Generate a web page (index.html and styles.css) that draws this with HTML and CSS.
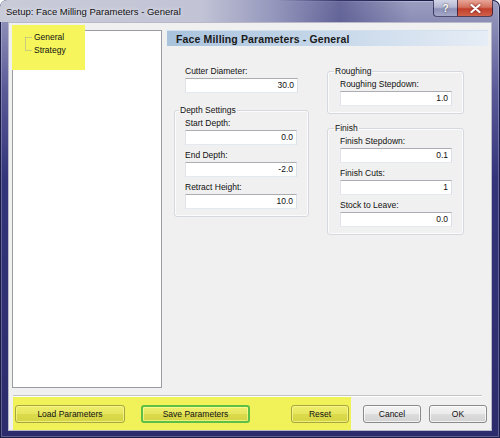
FILE: index.html
```html
<!DOCTYPE html>
<html>
<head>
<meta charset="utf-8">
<link rel="stylesheet" href="styles.css">
</head>
<body>
<div class="window">
  <div class="titlebar">
    <span class="title">Setup: Face Milling Parameters - General</span>
    <div class="caption-btns">
      <span class="cb help">?</span>
      <span class="cb close"><svg width="11" height="9" viewBox="0 0 11 9"><path d="M1.5 1 L9.5 8 M9.5 1 L1.5 8" stroke="#fff" stroke-width="2.2" stroke-linecap="round"/></svg></span>
    </div>
  </div>
  <div class="client">
    <div class="main">
      <div class="tree">
        <div class="tree-hl"></div>
        <div class="tree-list">
          <svg class="tree-lines" width="8" height="26" viewBox="0 0 8 26"><path d="M0.5 6.5 H7 M0.5 6.5 V19.5 H7" stroke="#a0a0a0" stroke-width="1" stroke-dasharray="1 1" fill="none"/></svg>
          <div class="tree-items">
            <div class="tree-item sel">General</div>
            <div class="tree-item">Strategy</div>
          </div>
        </div>
      </div>
      <div class="page">
        <div class="page-header">Face Milling Parameters - General</div>
        <div class="page-body">
          <div class="col col-left">
            <div class="field plain">
              <label>Cutter Diameter:</label>
              <div class="input">30.0</div>
            </div>
            <fieldset class="group">
              <legend>Depth Settings</legend>
              <div class="field">
                <label>Start Depth:</label>
                <div class="input">0.0</div>
              </div>
              <div class="field">
                <label>End Depth:</label>
                <div class="input">-2.0</div>
              </div>
              <div class="field">
                <label>Retract Height:</label>
                <div class="input">10.0</div>
              </div>
            </fieldset>
          </div>
          <div class="col col-right">
            <fieldset class="group">
              <legend>Roughing</legend>
              <div class="field">
                <label>Roughing Stepdown:</label>
                <div class="input">1.0</div>
              </div>
            </fieldset>
            <fieldset class="group group-finish">
              <legend>Finish</legend>
              <div class="field">
                <label>Finish Stepdown:</label>
                <div class="input">0.1</div>
              </div>
              <div class="field">
                <label>Finish Cuts:</label>
                <div class="input">1</div>
              </div>
              <div class="field">
                <label>Stock to Leave:</label>
                <div class="input">0.0</div>
              </div>
            </fieldset>
          </div>
        </div>
      </div>
    </div>
    <div class="sep"></div>
    <div class="btnbar">
      <div class="hl-group">
        <button class="btn btn-hl btn-load">Load Parameters</button>
        <button class="btn btn-hl btn-save">Save Parameters</button>
        <button class="btn btn-hl btn-reset">Reset</button>
      </div>
      <div class="std-group">
        <button class="btn btn-std">Cancel</button>
        <button class="btn btn-std">OK</button>
      </div>
    </div>
  </div>
</div>
</body>
</html>
```
FILE: styles.css
```css
* { box-sizing: border-box; }
html, body { margin: 0; padding: 0; background: #fff; }
body {
  width: 500px;
  height: 438px;
  font-family: "Liberation Sans", Arial, sans-serif;
  font-size: 8.5px;
  color: #111;
}
.window {
  width: 500px;
  height: 438px;
  border-radius: 7px 7px 0 0;
  background: linear-gradient(to bottom, #9c9ec0 0, #5a5a98 90px, #33337a 180px, #2c2c6c 100%);
  box-shadow: inset 0 0 0 1px #1c1c48, inset 0 0 0 2px rgba(255,255,255,0.25);
  display: flex;
  flex-direction: column;
  overflow: hidden;
}
.titlebar {
  height: 22px;
  display: flex;
  align-items: flex-start;
  background: linear-gradient(to right, #c9cbd8 0, #c2c4d6 40%, #9496bc 55%, rgba(70,70,130,0.6) 68%, rgba(40,40,100,0) 82%);
}
.title {
  padding-left: 6px;
  line-height: 23px;
  font-size: 9.5px;
  color: #111;
  text-shadow: 0 0 4px rgba(255,255,255,0.9);
}
.caption-btns {
  margin-left: auto;
  margin-right: 7px;
  display: flex;
}
.cb {
  height: 17px;
  display: flex;
  align-items: center;
  justify-content: center;
  border: 1px solid rgba(20,20,60,0.7);
  border-top: none;
}
.help {
  width: 24px;
  border-radius: 0 0 0 4px;
  background: linear-gradient(to bottom, #d2d4e6 0, #b4b7d2 45%, #8d91b8 55%, #a5a8c8 100%);
  color: #fff;
  font-weight: bold;
  font-size: 10px;
  text-shadow: 0 0 2px #333;
  border-right: none;
}
.close {
  width: 36px;
  border-radius: 0 0 4px 0;
  background: linear-gradient(to bottom, #e7a597 0, #d4715f 45%, #c2402c 55%, #d0614a 100%);
}
.close svg { filter: drop-shadow(0 0 1px #611); }
.client {
  flex: 1;
  margin: 0 8px 7px 8px;
  background: #f0f0f0;
  border: 1px solid #b8b9c8;
  padding: 7px 3px 0 3px;
  display: flex;
  flex-direction: column;
}
.main {
  display: flex;
  height: 358px;
}
.tree {
  position: relative;
  width: 150px;
  height: 358px;
  background: #fff;
  border: 1px solid #9a9ca4;
  padding: 0 0 0 12px;
}
.tree-hl {
  position: absolute;
  left: -1px;
  top: -6px;
  width: 73px;
  height: 45px;
  background: #f6f65c;
}
.tree-list {
  position: relative;
  display: flex;
  align-items: flex-start;
}
.tree-lines { display: block; margin-top: 0; }
.tree-item {
  line-height: 13px;
  padding: 0 1px;
}
.page {
  flex: 1;
  margin-left: 5px;
  display: flex;
  flex-direction: column;
}
.page-header {
  height: 16px;
  margin-right: 0;
  padding-left: 9px;
  line-height: 16px;
  font-weight: bold;
  font-size: 10.5px;
  letter-spacing: 0.15px;
  color: #1a1a1a;
  background: linear-gradient(to right, #a9c3dd 0, #c3d5e8 45%, #e6edf6 100%);
  border-top: 1px solid #d3e0ee;
}
.page-body {
  display: flex;
  padding: 19px 0 0 7px;
  gap: 18px;
  align-items: flex-start;
}
.col { display: flex; flex-direction: column; }
.col-left { width: 135px; }
.col-right { width: 137px; }
.field { display: flex; flex-direction: column; }
.field + .field { margin-top: 4px; }
.field.plain { padding: 0 11px; }
.field label { line-height: 13px; display: block; }
.input {
  height: 15px;
  background: #fff;
  border: 1px solid;
  border-color: #abadb3 #dbdfe6 #e3e9ef #e2e3ea;
  text-align: right;
  padding-right: 3px;
  line-height: 13px;
}
.group {
  margin: 0;
  border: 1px solid #d5d9de;
  border-radius: 3px;
  box-shadow: inset 0 0 0 1px #fbfbfb;
  padding: 1px 11px 7px 10px;
  min-width: 0;
}
.col-left .group { margin-top: 11px; }
.col-right .group { padding-left: 12px; }
.group-finish { margin-top: 8px !important; }
.group legend {
  line-height: 12px;
  padding: 0 1px;
  margin-left: -6px;
}
.sep {
  margin: 7px 6px 0 1px;
  border-top: 1px solid #c4c4c4;
  border-bottom: 1px solid #fff;
}
.btnbar {
  flex: 1;
  display: flex;
  padding-left: 1px;
}
.hl-group {
  width: 338px;
  margin-top: 0;
  background: #f1f15a;
  display: flex;
  align-items: flex-start;
  padding: 8px 2px 0 2px;
}
.btn {
  height: 18px;
  font-family: "Liberation Sans", Arial, sans-serif;
  font-size: 8.5px;
  color: #111;
  border-radius: 3px;
  padding: 0;
  margin: 0;
}
.btn-std {
  width: 58px;
  border: 1px solid #8a8a8a;
  background: linear-gradient(to bottom, #f4f4f4 0, #ebebeb 48%, #dddddd 52%, #d2d2d2 100%);
  box-shadow: inset 0 0 0 1px rgba(255,255,255,0.7);
}
.btn-hl {
  border: 1px solid #a6a63c;
  background: linear-gradient(to bottom, #eeee6c 0, #e6e65e 48%, #dada4c 52%, #d4d444 100%);
  box-shadow: inset 0 0 0 1px rgba(255,255,160,0.6);
}
.btn-load { width: 110px; }
.btn-save {
  width: 109px;
  margin-left: 16px;
  border: 2px solid #5cc046;
}
.btn-reset { width: 58px; margin-left: auto; }
.std-group {
  display: flex;
  gap: 8px;
  margin-left: 12px;
  padding-top: 8px;
  align-items: flex-start;
}
```
